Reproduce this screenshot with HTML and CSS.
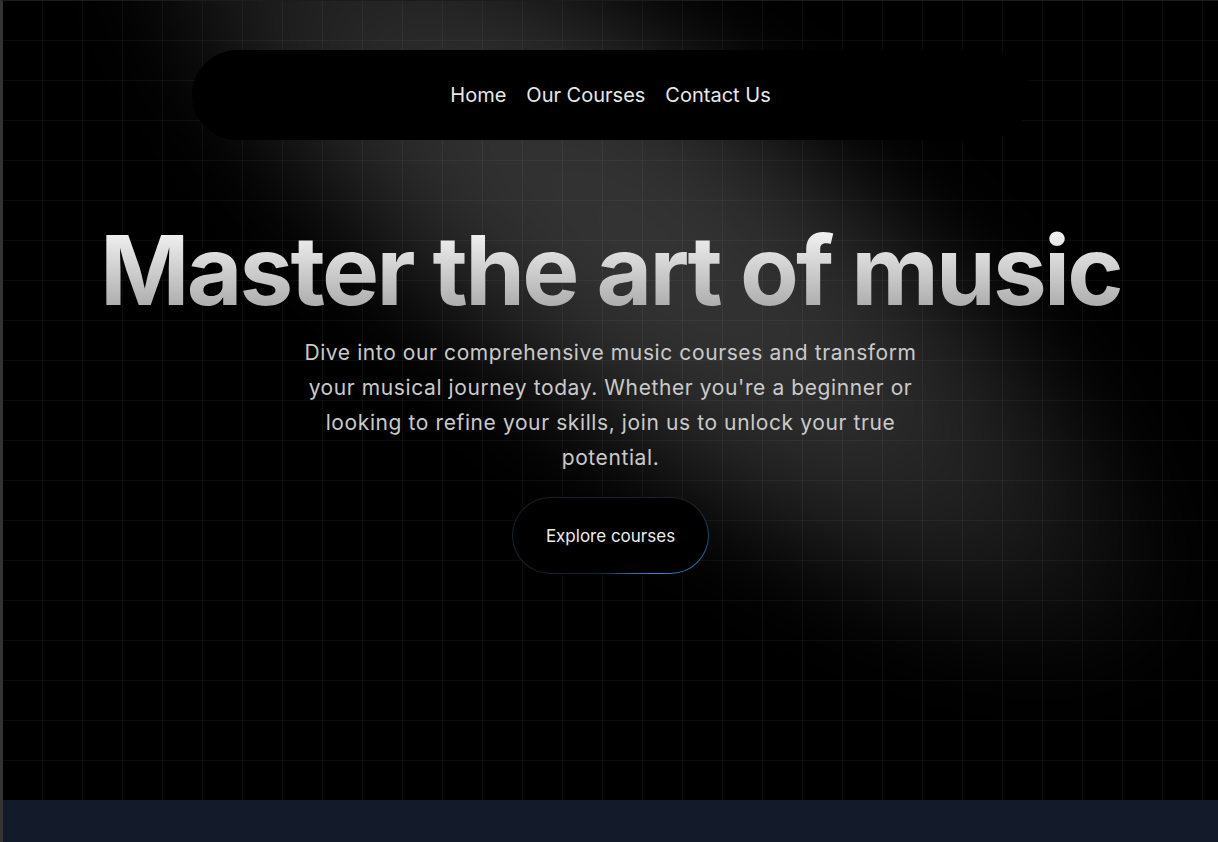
FILE: index.html
```html
<!DOCTYPE html>
<html lang="en">
<head>
<meta charset="utf-8">
<title>Music School</title>
<link rel="stylesheet" href="styles.css">
</head>
<body>
<div class="frame">
  <section class="hero">
    <div class="spotlight"></div>
    <nav class="nav">
      <a href="#">Home</a>
      <a href="#">Our Courses</a>
      <a href="#">Contact Us</a>
    </nav>
    <div class="hero-content">
      <h1 class="title">Master the art of music</h1>
      <p class="lead">Dive into our comprehensive music courses and transform your musical journey today. Whether you're a beginner or looking to refine your skills, join us to unlock your true potential.</p>
      <a class="cta" href="#">Explore courses</a>
    </div>
  </section>
  <section class="next"></section>
</div>
</body>
</html>
```
FILE: styles.css
```css
* { box-sizing: border-box; }
html, body { margin: 0; padding: 0; background: #000; }
body {
  font-family: Inter, "Noto Sans", "Liberation Sans", sans-serif;
  color: #e5e5e5;
  overflow: hidden;
}
.frame {
  border-left: 3px solid #343434;
  border-top: 1px solid #1c1c1c;
  min-height: 842px;
  background: #131a2a;
}
.hero {
  position: relative;
  overflow: hidden;
  height: 799px;
  background-color: #000;
  background-image:
    linear-gradient(to right, transparent 39px, rgba(255,255,255,0.045) 39px, rgba(255,255,255,0.045) 40px),
    linear-gradient(to bottom, transparent 39px, rgba(255,255,255,0.045) 39px, rgba(255,255,255,0.045) 40px);
  background-size: 40px 40px;
  display: flex;
  flex-direction: column;
  align-items: center;
}
.spotlight {
  position: absolute;
  left: -43px;
  top: 9px;
  width: 1360px;
  height: 460px;
  transform: rotate(37deg);
  background: radial-gradient(ellipse closest-side, rgba(255,255,255,0.21), rgba(255,255,255,0.18) 40%, rgba(255,255,255,0.11) 68%, rgba(255,255,255,0.035) 88%, rgba(255,255,255,0) 100%);
  filter: blur(40px);
  z-index: 0;
  pointer-events: none;
}
.nav {
  position: relative;
  z-index: 2;
  margin-top: 49px;
  width: 838px;
  height: 90px;
  border-radius: 45px;
  background: #000;
  display: flex;
  align-items: center;
  justify-content: center;
  gap: 20px;
}
.nav a {
  color: #e8e8e8;
  text-decoration: none;
  font-size: 20px;
}
.hero-content {
  position: relative;
  z-index: 1;
  display: flex;
  flex-direction: column;
  align-items: center;
  margin-top: 82px;
}
.title {
  margin: 0;
  font-size: 96px;
  line-height: 96px;
  font-weight: 700;
  letter-spacing: -2.8px;
  background: linear-gradient(to bottom, #fafafa, #a3a3a3);
  -webkit-background-clip: text;
  background-clip: text;
  color: transparent;
  white-space: nowrap;
}
.lead {
  margin: 17px 0 0;
  max-width: 640px;
  text-align: center;
  font-size: 21px;
  line-height: 35px;
  letter-spacing: 0.6px;
  color: #cacaca;
}
.cta {
  margin-top: 22px;
  height: 77px;
  padding: 0 33px;
  display: inline-flex;
  align-items: center;
  border-radius: 39px;
  border: 1.5px solid transparent;
  background:
    linear-gradient(#000, #000) padding-box,
    conic-gradient(from 0deg at 50% 50%, #16222d 0deg, #16222d 70deg, #1d5f8f 100deg, #2a8fd0 130deg, #1d5f8f 160deg, #16222d 195deg, #16222d 360deg) border-box;
  color: #ececec;
  font-size: 17px;
  text-decoration: none;
}
.next {
  height: 42px;
  background: #131a2a;
}
```
